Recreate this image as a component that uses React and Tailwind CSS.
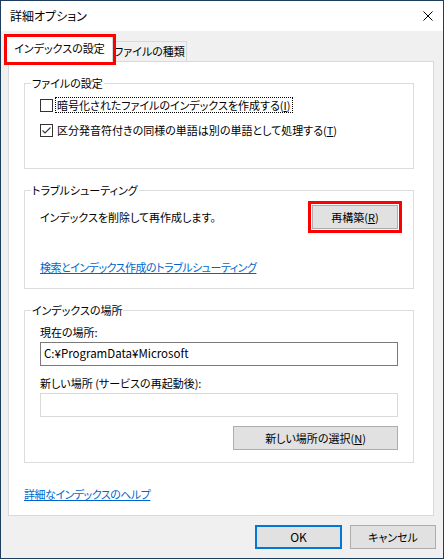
import React from 'react'

// Dialog close glyph (thin X)
function CloseIcon({ className }) {
  return (
    <svg className={className} viewBox="0 0 10 10" fill="none" stroke="currentColor" strokeWidth={1}>
      <path d="M0.5 0.5L9.5 9.5M9.5 0.5L0.5 9.5" />
    </svg>
  )
}

function Checkbox({ checked, children, focused }) {
  return (
    <label className="flex h-4 items-center">
      <span className="flex h-[13px] w-[13px] items-center justify-center border border-[#333333] bg-white">
        {checked && (
          <svg className="h-[11px] w-[11px]" viewBox="0 0 11 11" fill="none" stroke="#333333" strokeWidth={1.1}>
            <path d="M1.5 5.5L4 8L9.5 2.5" />
          </svg>
        )}
      </span>
      <span
        className={`ml-[2px] h-4 whitespace-nowrap px-[2px] leading-4 ${
          focused ? 'outline outline-1 outline-dotted outline-black -outline-offset-1' : ''
        }`}
      >
        {children}
      </span>
    </label>
  )
}

function Group({ title, className = '', children }) {
  return (
    <fieldset className={`ml-[15px] w-[390px] border border-[#dcdcdc] ${className}`}>
      <legend className="ml-[6px] px-[1px] leading-4">{title}</legend>
      <div className="px-[15px]">{children}</div>
    </fieldset>
  )
}

function Button({ children, className = '' }) {
  return (
    <button className={`h-6 whitespace-nowrap border border-[#adadad] bg-[#e1e1e1] text-center leading-4 ${className}`}>
      {children}
    </button>
  )
}

export default function App() {
  return (
    <div className="flex h-[559px] w-[444px] flex-col border border-[#1c3d5e] bg-[#f0f0f0] text-[11px] text-black font-['Yu_Gothic_UI','Noto_Sans_CJK_JP',sans-serif] [font-feature-settings:'palt']">
      {/* Title bar */}
      <div className="flex h-[30px] shrink-0 items-center justify-between bg-white pl-[9px] pr-[10px]">
        <span className="text-[12px] leading-4">詳細オプション</span>
        <CloseIcon className="h-[10px] w-[10px]" />
      </div>

      {/* Tabs */}
      <div className="ml-[7px] flex h-[30px] items-end">
        <div className="relative z-10 -mb-px -ml-[2px] flex h-[26px] w-[107px] items-center justify-center whitespace-nowrap border border-b-0 border-[#d9d9d9] bg-white pb-[2px]">
          インデックスの設定
          <span className="absolute -bottom-[3px] -left-[3px] -right-[4px] -top-[3px] border-[3px] border-[#ff0000]" />
        </div>
        <div className="flex h-5 w-[74px] items-center justify-center whitespace-nowrap border border-b-0 border-l-0 border-[#d9d9d9] bg-[#f0f0f0]">
          ファイルの種類
        </div>
      </div>

      {/* Tab panel */}
      <div className="ml-[7px] w-[426px] border border-[#d9d9d9] bg-white pb-[13px]">
        <Group title="ファイルの設定" className="mt-[13px] pb-[30px]">
          <div className="mt-[6px]">
            <Checkbox focused>
              暗号化されたファイルのインデックスを作成する(<u>I</u>)
            </Checkbox>
          </div>
          <div className="mt-[9px]">
            <Checkbox checked>
              区分発音符付きの同様の単語は別の単語として処理する(<u>T</u>)
            </Checkbox>
          </div>
        </Group>

        <Group title="トラブルシューティング" className="mt-[13px] pb-[13px]">
          <div className="mt-[7px] flex h-6 items-center justify-between">
            <span className="leading-4">インデックスを削除して再作成します。</span>
            <div className="relative">
              <Button className="w-[86px]">
                再構築(<u>R</u>)
              </Button>
              <span className="absolute -bottom-[4px] -left-[4px] -right-[4px] -top-[4px] border-[3px] border-[#ff0000]" />
            </div>
          </div>
          <div className="mt-[30px] h-4 leading-4">
            <a className="tracking-[-0.5px] text-[#0066cc] underline">検索とインデックス作成のトラブルシューティング</a>
          </div>
        </Group>

        <Group title="インデックスの場所" className="mt-[13px] pb-[12px]">
          <div className="mt-[6px] leading-4">現在の場所:</div>
          <div className="mt-[2px] flex h-6 items-center border border-[#7a7a7a] pl-[3px] text-[11.5px]">
            C:¥ProgramData¥Microsoft
          </div>
          <div className="mt-[9px] leading-4">新しい場所 (サービスの再起動後):</div>
          <div className="mt-[2px] h-6 border border-[#d9d9d9] bg-white" />
          <div className="mt-[9px] flex justify-end">
            <Button className="w-[165px]">
              新しい場所の選択(<u>N</u>)
            </Button>
          </div>
        </Group>

        <div className="ml-[15px] mt-[23px] h-4 leading-4">
          <a className="tracking-[-0.5px] text-[#0066cc] underline">詳細なインデックスのヘルプ</a>
        </div>
      </div>

      {/* Footer buttons */}
      <div className="mr-[7px] mt-[9px] flex justify-end gap-[8px]">
        <button className="h-6 w-[87px] border-2 border-[#0078d7] bg-[#e1e1e1] text-[12px] leading-4">OK</button>
        <Button className="w-[86px]">キャンセル</Button>
      </div>
    </div>
  )
}
